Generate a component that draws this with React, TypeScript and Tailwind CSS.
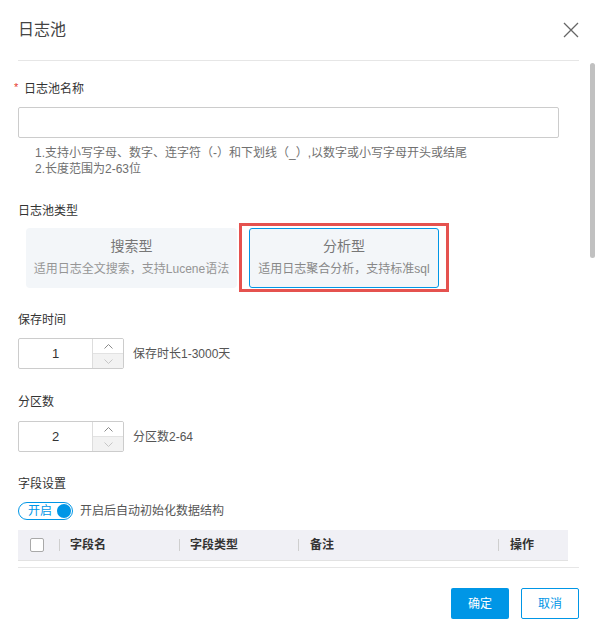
const font = "font-['Liberation_Sans','Noto_Sans_CJK_SC',sans-serif]"

function Chevron({ up, color }: { up: boolean; color: string }) {
  return (
    <svg width="9" height="5" viewBox="0 0 9 5" fill="none">
      <polyline
        points={up ? '0.5,4.5 4.5,0.5 8.5,4.5' : '0.5,0.5 4.5,4.5 8.5,0.5'}
        stroke={color}
        strokeWidth="1"
      />
    </svg>
  )
}

function NumberInput({ value, hint }: { value: string; hint: string }) {
  return (
    <div className="flex items-center">
      <div className="flex h-[31px] w-[106px] border border-[#cccccc] rounded-[2px] overflow-hidden">
        <div className="flex-1 flex items-center justify-center text-[13px] text-[#333]">{value}</div>
        <div className="w-[31px] flex flex-col border-l border-[#dddddd]">
          <div className="flex-1 flex items-center justify-center bg-white">
            <Chevron up color="#8a8a8a" />
          </div>
          <div className="flex-1 flex items-center justify-center bg-[#f2f2f2] border-t border-[#e2e2e2]">
            <Chevron up={false} color="#c6c6c6" />
          </div>
        </div>
      </div>
      <span className="ml-[9px] text-[12px] text-[#555]">{hint}</span>
    </div>
  )
}

function Label({ children }: { children: React.ReactNode }) {
  return <div className="text-[12px] leading-[20px] text-[#333]">{children}</div>
}

export default function App() {
  return (
    <div className={`${font} w-[597px] h-[636px] bg-white`}>
      {/* header */}
      <div className="mx-[18px] h-[61px] border-b border-[#e6e6e6] flex items-center justify-between">
        <span className="text-[16px] text-[#444]">日志池</span>
        <svg width="16" height="16" viewBox="0 0 16 16" className="-mt-px">
          <path d="M1 1L15 15M15 1L1 15" stroke="#666" strokeWidth="1.3" />
        </svg>
      </div>

      {/* body */}
      <div className="relative h-[506px] overflow-hidden pl-[18px] pr-[29px]">
        <div className="absolute right-[2px] top-[2px] w-[5px] h-[195px] rounded-full bg-[#c1c1c1]" />

        <div className="mt-[18px] flex items-center text-[12px] leading-[20px] text-[#333]">
          <span className="text-[#e5382e] w-[6px] -ml-[4px] mr-[4px] text-[11px] -mt-[4px]">*</span>
          日志池名称
        </div>
        <div className="mt-[8px] w-[541px] h-[31px] border border-[#cccccc] rounded-[2px]" />
        <div className="mt-[7px] pl-[17px] text-[12px] leading-[16px] text-[#707070]">
          <div>1.支持小写字母、数字、连字符（-）和下划线（_）,以数字或小写字母开头或结尾</div>
          <div>2.长度范围为2-63位</div>
        </div>

        <div className="mt-[24px]">
          <Label>日志池类型</Label>
        </div>
        <div className="mt-[7px] flex pl-[8px]">
          <div className="w-[211px] h-[60px] rounded-[4px] bg-[#f3f6f9] flex flex-col items-center pt-[8px]">
            <span className="text-[14px] leading-[20px] text-[#777]">搜索型</span>
            <span className="mt-[5px] text-[12px] leading-[16px] text-[#959595]">适用日志全文搜索，支持Lucene语法</span>
          </div>
          <div className="relative ml-[12px] w-[190px] h-[60px] rounded-[3px] bg-[#f3f6f9] border border-[#0096e6] flex flex-col items-center pt-[7px]">
            <span className="text-[14px] leading-[20px] text-[#777]">分析型</span>
            <span className="mt-[5px] text-[12px] leading-[16px] text-[#888]">适用日志聚合分析，支持标准sql</span>
            <span className="absolute -left-[11px] -right-[11px] -top-[6px] -bottom-[5px] border-[3px] border-[#e5524f]" />
          </div>
        </div>

        <div className="mt-[22px]">
          <Label>保存时间</Label>
        </div>
        <div className="mt-[8px]">
          <NumberInput value="1" hint="保存时长1-3000天" />
        </div>

        <div className="mt-[23px]">
          <Label>分区数</Label>
        </div>
        <div className="mt-[9px]">
          <NumberInput value="2" hint="分区数2-64" />
        </div>

        <div className="mt-[22px]">
          <Label>字段设置</Label>
        </div>
        <div className="mt-[8px] flex items-center h-[18px]">
          <div className="w-[55px] h-[18px] border border-[#0096e6] rounded-full flex items-center pl-[9px] pr-[1px]">
            <span className="text-[12px] leading-[16px] text-[#0096e6]">开启</span>
            <span className="ml-auto w-[14px] h-[14px] rounded-full bg-[#0096e6]" />
          </div>
          <span className="ml-[7px] text-[12px] text-[#555]">开启后自动初始化数据结构</span>
        </div>

        <div className="mt-[10px] h-[31px] bg-[#f0f0f5] border-b border-[#e2e2e2] flex items-center text-[12px] font-bold text-[#333]">
          <div className="w-[41px] flex items-center pl-[12px]">
            <span className="w-[14px] h-[14px] border border-[#a9a9a9] rounded-[2px] bg-white" />
          </div>
          <div className="w-[120px] flex items-center">
            <span className="w-px h-[12px] bg-[#cfcfcf]" />
            <span className="ml-[10px]">字段名</span>
          </div>
          <div className="w-[119px] flex items-center">
            <span className="w-px h-[12px] bg-[#cfcfcf]" />
            <span className="ml-[10px]">字段类型</span>
          </div>
          <div className="w-[200px] flex items-center">
            <span className="w-px h-[12px] bg-[#cfcfcf]" />
            <span className="ml-[11px]">备注</span>
          </div>
          <div className="flex-1 flex items-center">
            <span className="w-px h-[12px] bg-[#cfcfcf]" />
            <span className="ml-[11px]">操作</span>
          </div>
        </div>
      </div>

      {/* footer */}
      <div className="mx-[18px] border-t border-[#e6e6e6] pt-[20px] flex justify-end gap-[12px]">
        <button className="w-[58px] h-[31px] rounded-[2px] bg-[#0096e6] text-white text-[12px]">确定</button>
        <button className="w-[58px] h-[31px] rounded-[2px] border border-[#0096e6] bg-white text-[#0096e6] text-[12px]">取消</button>
      </div>
    </div>
  )
}
